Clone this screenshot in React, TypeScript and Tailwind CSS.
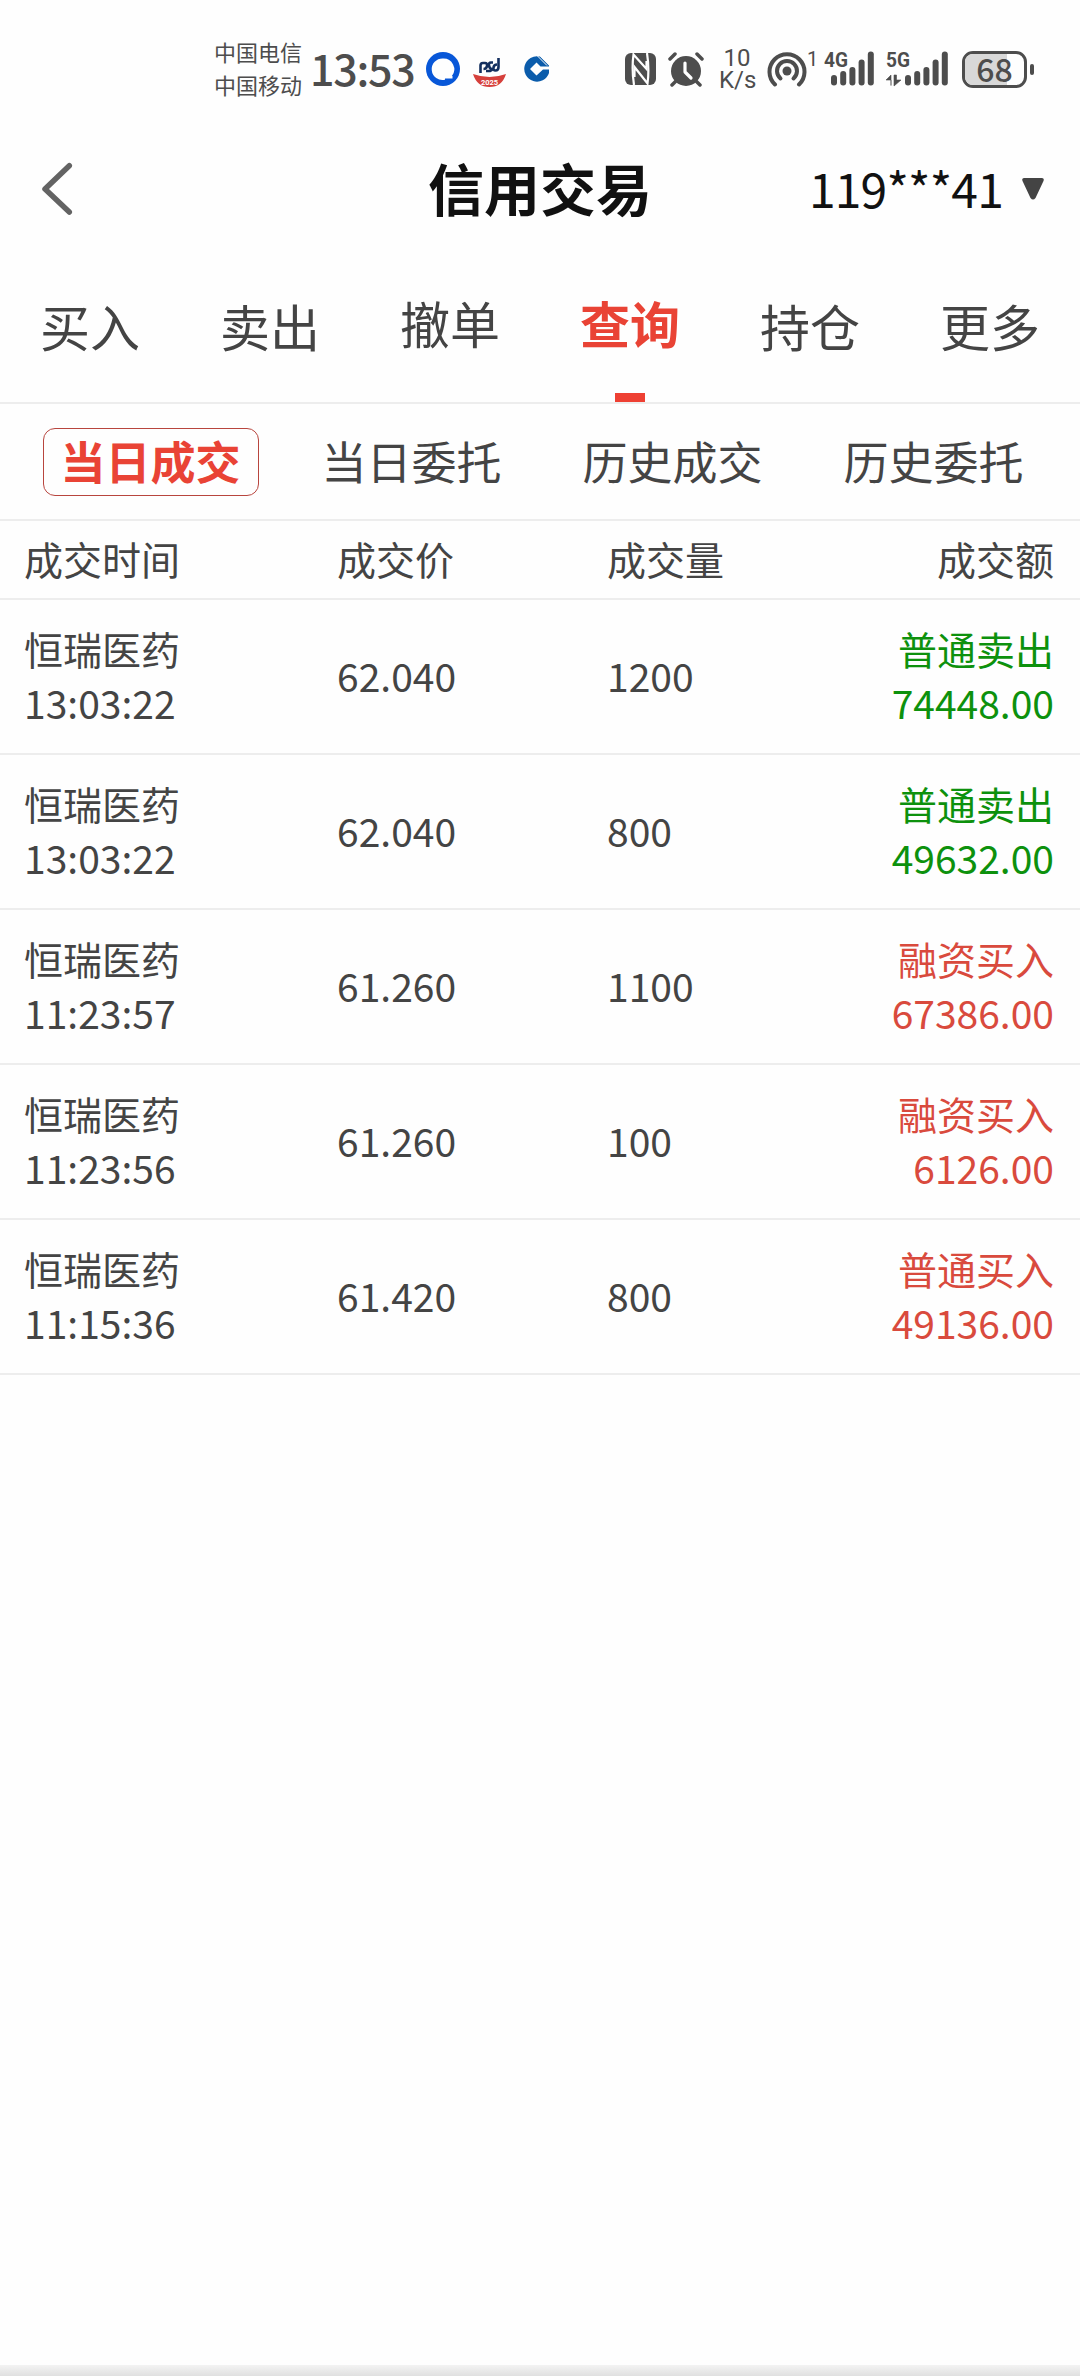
import { ReactNode } from 'react';

type Side = 'buy' | 'sell';

interface Deal {
  name: string;
  time: string;
  price: string;
  volume: string;
  kind: string;
  amount: string;
  side: Side;
}

const TABS = ['买入', '卖出', '撤单', '查询', '持仓', '更多'];
const RAISED_TABS = ['撤单', '查询'];
const FILTERS = ['当日成交', '当日委托', '历史成交', '历史委托'];

const DEALS: Deal[] = [
  { name: '恒瑞医药', time: '13:03:22', price: '62.040', volume: '1200', kind: '普通卖出', amount: '74448.00', side: 'sell' },
  { name: '恒瑞医药', time: '13:03:22', price: '62.040', volume: '800', kind: '普通卖出', amount: '49632.00', side: 'sell' },
  { name: '恒瑞医药', time: '11:23:57', price: '61.260', volume: '1100', kind: '融资买入', amount: '67386.00', side: 'buy' },
  { name: '恒瑞医药', time: '11:23:56', price: '61.260', volume: '100', kind: '融资买入', amount: '6126.00', side: 'buy' },
  { name: '恒瑞医药', time: '11:15:36', price: '61.420', volume: '800', kind: '普通买入', amount: '49136.00', side: 'buy' },
];

const sideColor: Record<Side, string> = {
  buy: 'text-[#d94a3d]',
  sell: 'text-[#0d910d]',
};

function QuarkIcon() {
  return (
    <svg width="34" height="34" viewBox="0 0 34 34">
      <circle cx="17" cy="17" r="17" fill="#0857d8" />
      <path d="M17 6.500a10.800 10.800 0 1 0 2 21.300V26.500h7.500V24h-.6A10.800 10.800 0 0 0 17 6.500z" fill="#fefefe" />
    </svg>
  );
}

function BrokerIcon() {
  return (
    <svg width="35" height="31" viewBox="0 0 35 31">
      <g fill="none" stroke="#14305f" strokeWidth="2.600">
        <path d="M8.500 16V8.500q0-2.500 2.500-2.500h2q2.500 0 2 3t-3.500 3" />
        <path d="M21 5.500h-2q-2.500 0-2 3t2.500 3.500-1.500 2h-4" />
        <path d="M26.500 1v9q0 3.500-3 3.500-2.500 0-2-3t3.500-3" />
      </g>
      <path d="M1 17q16.500 6 33 0-4 13-16.500 13T1 17z" fill="#d6403c" />
      <text x="17.500" y="27.500" textAnchor="middle" fontSize="7.500" fontWeight="700" fill="#fff" fontFamily="Roboto, sans-serif">
        2025
      </text>
    </svg>
  );
}

function BankIcon() {
  return (
    <svg width="26" height="26" viewBox="0 0 26 26">
      <path
        d="M16 .6A12.700 12.700 0 1 0 25 17v-3.500h-6L12.500 19.500 6 13l6.500-6.500 4 4H25v-1L16 .6z"
        fill="#0b5cab"
      />
      <path d="M13.500 0l9.500 9.500M16.500 0L26 9.500" stroke="#fefefe" strokeWidth="1" />
    </svg>
  );
}

function NfcIcon() {
  return (
    <svg width="31" height="32" viewBox="0 0 31 32">
      <rect width="31" height="32" rx="6" fill="#4d4d4d" />
      <path d="M9 32Q6.500 16 8.500 1.500L21.500 16V8" fill="none" stroke="#fefefe" strokeWidth="2.200" />
      <path d="M22 0Q24.500 16 22.500 30.500L9.500 14v10" fill="none" stroke="#fefefe" strokeWidth="2.200" />
    </svg>
  );
}

function AlarmIcon() {
  return (
    <svg width="36" height="35" viewBox="0 0 36 35">
      <circle cx="18" cy="19" r="15" fill="#4d4d4d" />
      <path d="M2 7l5-5M34 7l-5-5M8 29l-4 4M28 29l4 4" stroke="#4d4d4d" strokeWidth="3.500" strokeLinecap="round" />
      <path d="M17 11v9l6 6" fill="none" stroke="#fefefe" strokeWidth="3.200" strokeLinecap="round" strokeLinejoin="round" />
    </svg>
  );
}

function HotspotIcon() {
  return (
    <svg width="40" height="35" viewBox="0 0 40 35">
      <circle cx="20" cy="19" r="4.500" fill="#4d4d4d" />
      <g fill="none" stroke="#4d4d4d" strokeWidth="4" strokeLinecap="round">
        <path d="M13.500 26.500a10 10 0 1 1 13 0" />
        <path d="M8 32.500a17.500 17.500 0 1 1 24 0" />
      </g>
    </svg>
  );
}

const BAR_TOPS = [24, 20, 16, 8.500, 0.500];

function Signal({ label, offset, arrows }: { label: string; offset: number; arrows?: boolean }) {
  return (
    <svg className="overflow-visible" width={offset + 43} height="36" viewBox={`0 0 ${offset + 43} 36`}>
      <text x="0" y="16" fontSize="21" fontWeight="700" fill="#4d4d4d" fontFamily="Roboto, sans-serif" textLength="24" lengthAdjust="spacingAndGlyphs">
        {label}
      </text>
      {arrows && (
        <path d="M5 34.500V24L0 29h5zM8 24h2.500v5H15l-7 6z" fill="#4d4d4d" stroke="#4d4d4d" strokeWidth=".6" />
      )}
      {BAR_TOPS.map((top, i) => (
        <rect key={top} x={offset + i * 9.200} y={top} width="6" height={34.500 - top} rx="3" fill="#4d4d4d" />
      ))}
    </svg>
  );
}

function Battery({ level }: { level: number }) {
  return (
    <div className="ml-[14px] flex items-center gap-[3px]">
      <div className="relative h-[37px] w-[65px] rounded-[11px] border-[3px] border-[#4d4d4d]">
        <div className="h-full rounded-l-[8px] bg-[#d8d8d8]" style={{ width: `${level + 3}%` }} />
        <span className="absolute -inset-x-1 -inset-y-2 text-center text-[32px] leading-[45px] font-medium">{level}</span>
      </div>
      <div className="h-[11px] w-[4px] rounded-full bg-[#4d4d4d]" />
    </div>
  );
}

function StatusBar() {
  return (
    <div className="flex h-[138px] items-center pl-[214px] text-[#4d4d4d]">
      <div className="w-[96px] pb-[3px] text-[22px] leading-[33px]">
        <p>中国电信</p>
        <p>中国移动</p>
      </div>
      <span className="w-[116px] pb-[4px] text-[43px] leading-[43px] font-medium tracking-[-1.3px]">13:53</span>
      <div className="flex w-[199px] items-center">
        <QuarkIcon />
        <div className="mt-[6px] ml-[12px]">
          <BrokerIcon />
        </div>
        <div className="ml-[17px]">
          <BankIcon />
        </div>
      </div>
      <NfcIcon />
      <div className="ml-[12px]">
        <AlarmIcon />
      </div>
      <div className="ml-[15px] w-[36px] text-center font-[Roboto,sans-serif] text-[24px] leading-[22px]">
        <p>10</p>
        <p>K/s</p>
      </div>
      <div className="ml-[12px]">
        <HotspotIcon />
      </div>
      <span className="mb-[20px] w-[17px] font-[Roboto,sans-serif] text-[20px] leading-none">1</span>
      <Signal label="4G" offset={7} />
      <div className="ml-[12px]">
        <Signal label="5G" offset={19} arrows />
      </div>
      <Battery level={68} />
    </div>
  );
}

function NavBar() {
  return (
    <div className="flex h-[102px] items-center justify-between pr-[36px] pl-[40px]">
      <div className="w-[236px]">
        <svg width="35" height="56" viewBox="0 0 35 56">
          <path d="M29.300 4.700L5 28l24.300 23" fill="none" stroke="#636363" strokeWidth="5.500" strokeLinecap="round" strokeLinejoin="round" />
        </svg>
      </div>
      <h1 className="pb-[4px] text-[56px] leading-none font-bold text-[#111]">信用交易</h1>
      <div className="flex w-[240px] items-center justify-end gap-[19px]">
        <span className="pb-[5px] text-[48px] leading-none tracking-[-0.8px] text-[#111]">119***41</span>
        <svg width="22" height="22" viewBox="0 0 22 22">
          <path d="M2 0h18q2.500 0 1.500 3l-8 17q-2.500 3-5 0l-8-17Q-.5 0 2 0z" fill="#444" />
        </svg>
      </div>
    </div>
  );
}

function Tabs({ active }: { active: string }) {
  return (
    <div className="grid h-[164px] grid-cols-6 border-b-2 border-[#ededed]">
      {TABS.map((tab) => (
        <div key={tab} className="flex flex-col items-center justify-between">
          <span
            className={`text-[50px] leading-[60px] ${RAISED_TABS.includes(tab) ? 'pt-[52px]' : 'pt-[55px]'} ${
              tab === active ? 'font-bold text-[#e94335]' : 'text-[#444]'
            }`}
          >
            {tab}
          </span>
          {tab === active && <span className="h-[9px] w-[30px] bg-[#ee4033]" />}
        </div>
      ))}
    </div>
  );
}

function Filters({ active }: { active: string }) {
  return (
    <div className="grid h-[117px] grid-cols-4 items-center justify-items-center border-b-2 border-[#ededed] pr-[16px] pl-[20px]">
      {FILTERS.map((f) => (
        <span
          key={f}
          className={`flex h-[68px] w-[216px] items-center justify-center rounded-[12px] pb-[3px] text-[45px] leading-none ${
            f === active ? 'border border-[#b8453e] font-bold text-[#e94335]' : 'text-[#444]'
          }`}
        >
          {f}
        </span>
      ))}
    </div>
  );
}

function Row({ className, children }: { className: string; children: ReactNode }) {
  return (
    <div
      className={`grid grid-cols-[313px_270px_1fr] items-center border-b-2 border-[#ededed] pr-[26px] pb-[3px] pl-[24px] text-[39px] text-[#444] ${className}`}
    >
      {children}
    </div>
  );
}

export default function App() {
  return (
    <div className="flex h-[2376px] w-[1080px] flex-col bg-[#fefefe] font-['Noto_Sans_CJK_SC',sans-serif]">
      <StatusBar />
      <NavBar />
      <Tabs active="查询" />
      <Filters active="当日成交" />
      <Row className="h-[79px] leading-none">
        <span>成交时间</span>
        <span>成交价</span>
        <div className="flex justify-between">
          <span>成交量</span>
          <span>成交额</span>
        </div>
      </Row>
      {DEALS.map((deal) => (
        <Row key={deal.time + deal.amount} className="h-[155px] leading-[54px]">
          <div>
            <p>{deal.name}</p>
            <p>{deal.time}</p>
          </div>
          <span>{deal.price}</span>
          <div className="flex items-center justify-between">
            <span>{deal.volume}</span>
            <div className={`text-right ${sideColor[deal.side]}`}>
              <p>{deal.kind}</p>
              <p>{deal.amount}</p>
            </div>
          </div>
        </Row>
      ))}
      <div className="mt-auto h-[11px] bg-linear-to-b from-[#f3f3f3] to-[#e0e0e0]" />
    </div>
  );
}
